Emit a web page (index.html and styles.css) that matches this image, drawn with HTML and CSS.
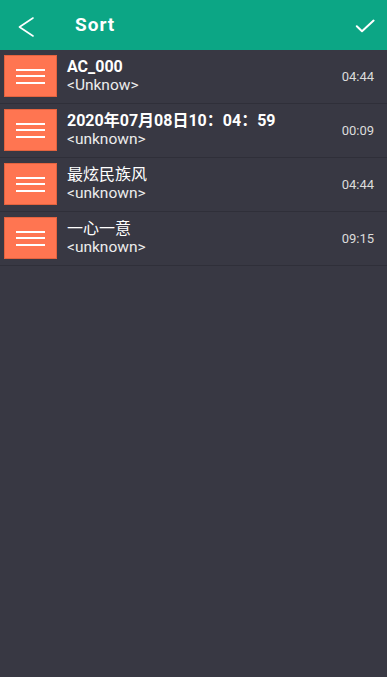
FILE: index.html
```html
<!DOCTYPE html>
<html>
<head>
<meta charset="utf-8">
<link rel="stylesheet" href="styles.css">
</head>
<body>
<div class="app">
  <header class="topbar">
    <svg class="back" viewBox="0 0 16 20" width="16" height="20"><path d="M15 1 L1.5 10 L15 19" fill="none" stroke="#fff" stroke-width="1.6" stroke-linecap="round" stroke-linejoin="round"/></svg>
    <div class="title">Sort</div>
    <svg class="check" viewBox="0 0 20 14" width="20" height="14"><path d="M1.8 7.3 L7 12.3 L18.6 1.6" fill="none" stroke="#fff" stroke-width="2" stroke-linecap="round" stroke-linejoin="round"/></svg>
  </header>
  <ul class="list">
    <li class="row">
      <div class="handle"><span></span><span></span><span></span></div>
      <div class="info"><div class="name bold">AC_000</div><div class="artist">&lt;Unknow&gt;</div></div>
      <div class="time">04:44</div>
    </li>
    <li class="row">
      <div class="handle"><span></span><span></span><span></span></div>
      <div class="info"><div class="name bold">2020年07月08日10：04：59</div><div class="artist">&lt;unknown&gt;</div></div>
      <div class="time">00:09</div>
    </li>
    <li class="row">
      <div class="handle"><span></span><span></span><span></span></div>
      <div class="info"><div class="name">最炫民族风</div><div class="artist">&lt;unknown&gt;</div></div>
      <div class="time">04:44</div>
    </li>
    <li class="row">
      <div class="handle"><span></span><span></span><span></span></div>
      <div class="info"><div class="name">一心一意</div><div class="artist">&lt;unknown&gt;</div></div>
      <div class="time">09:15</div>
    </li>
  </ul>
</div>
</body>
</html>
```
FILE: styles.css
```css
* { box-sizing: border-box; }
html, body {
  margin: 0;
  padding: 0;
  height: 100%;
  background: #383843;
}
body {
  font-family: Roboto, "Noto Sans CJK SC", sans-serif;
  color: #fff;
}
.app {
  min-height: 100%;
  background: #383843;
}
.topbar {
  height: 50px;
  background: #0ca685;
  display: flex;
  align-items: center;
}
.back {
  margin-left: 18px;
  margin-top: 4px;
  flex: none;
}
.title {
  margin-left: 41px;
  font-size: 19px;
  font-weight: bold;
  letter-spacing: 1px;
  line-height: 22px;
  flex: 1;
}
.check {
  margin-right: 12px;
  margin-top: 2px;
  flex: none;
}
.list {
  list-style: none;
  margin: 0;
  padding: 0;
}
.row {
  height: 54px;
  display: flex;
  align-items: center;
  padding-left: 4px;
  padding-bottom: 1px;
  border-bottom: 1px solid #2f2f39;
}
.handle {
  width: 53px;
  height: 42px;
  background: #ff7551;
  border: 1px solid #e2633f;
  display: flex;
  flex-direction: column;
  align-items: center;
  justify-content: center;
  gap: 4.5px;
  flex: none;
}
.handle span {
  display: block;
  width: 29px;
  height: 2px;
  background: #fff;
}
.info {
  margin-left: 10px;
  flex: 1;
  min-width: 0;
}
.name {
  font-size: 16px;
  line-height: 18.5px;
  color: #fff;
  white-space: nowrap;
}
.bold { font-weight: bold; }
.artist {
  font-size: 15.5px;
  line-height: 18.5px;
  color: #ececec;
}
.time {
  font-size: 13px;
  color: #dcdcdc;
  padding-right: 13px;
  flex: none;
}
```
